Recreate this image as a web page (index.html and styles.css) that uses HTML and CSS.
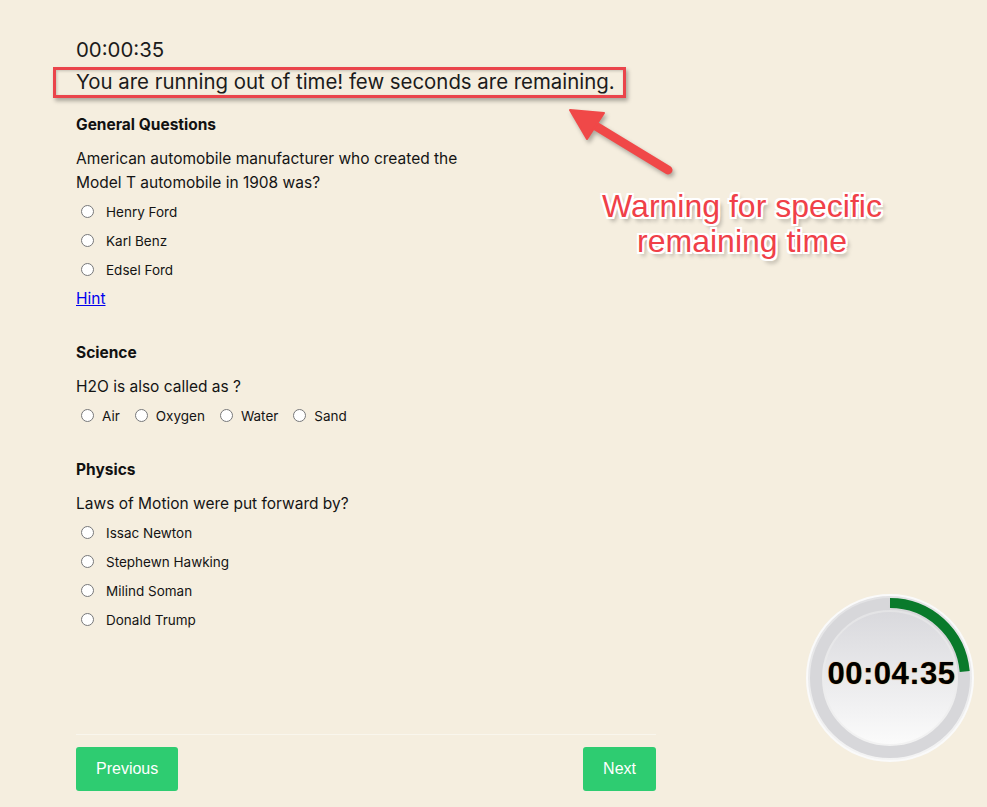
FILE: index.html
```html
<!DOCTYPE html>
<html lang="en">
<head>
  <meta charset="UTF-8" />
  <meta name="viewport" content="width=device-width, initial-scale=1.0" />
  <title>Quiz Timer</title>
  <link rel="stylesheet" href="styles.css">
</head>
<body>
  <main class="quiz">
    <div class="countdown">00:00:35</div>
    <div class="warning">You are running out of time! few seconds are remaining.</div>

    <section class="block">
      <h3>General Questions</h3>
      <p class="question">American automobile manufacturer who created the Model T automobile in 1908 was?</p>
      <label class="option"><input type="radio" name="q1" /><span>Henry Ford</span></label>
      <label class="option"><input type="radio" name="q1" /><span>Karl Benz</span></label>
      <label class="option"><input type="radio" name="q1" /><span>Edsel Ford</span></label>
      <a class="hint" href="#">Hint</a>
    </section>

    <section class="block">
      <h3>Science</h3>
      <p class="question">H2O is also called as ?</p>
      <div class="inline-options">
        <label><input type="radio" name="q2" /><span>Air</span></label>
        <label><input type="radio" name="q2" /><span>Oxygen</span></label>
        <label><input type="radio" name="q2" /><span>Water</span></label>
        <label><input type="radio" name="q2" /><span>Sand</span></label>
      </div>
    </section>

    <section class="block">
      <h3>Physics</h3>
      <p class="question">Laws of Motion were put forward by?</p>
      <label class="option"><input type="radio" name="q3" /><span>Issac Newton</span></label>
      <label class="option"><input type="radio" name="q3" /><span>Stephewn Hawking</span></label>
      <label class="option"><input type="radio" name="q3" /><span>Milind Soman</span></label>
      <label class="option"><input type="radio" name="q3" /><span>Donald Trump</span></label>
    </section>

    <div class="quiz-nav">
      <button type="button" class="btn">Previous</button>
      <button type="button" class="btn">Next</button>
    </div>
  </main>

  <!-- screenshot annotation -->
  <div class="callout-box"></div>
  <svg class="callout-arrow" width="140" height="90" viewBox="0 0 140 90">
    <line x1="118" y1="70" x2="44" y2="25" stroke="#f04848" stroke-width="9" stroke-linecap="round" />
    <polygon points="20,10 54,13 37,39" fill="#f04848" stroke="#f04848" stroke-width="2" stroke-linejoin="round" />
  </svg>
  <div class="callout-text">Warning for specific<br>remaining time</div>

  <div class="timer">
    <svg width="168" height="168" viewBox="0 0 168 168">
      <defs>
        <linearGradient id="face" x1="0" y1="0" x2="0" y2="1">
          <stop offset="0" stop-color="#d9d9dd" />
          <stop offset="1" stop-color="#fbfbfb" />
        </linearGradient>
        <linearGradient id="rim" x1="0" y1="0" x2="0" y2="1">
          <stop offset="0" stop-color="#e2e2e4" />
          <stop offset="1" stop-color="#f4f4f4" />
        </linearGradient>
      </defs>
      <circle cx="84" cy="84" r="83" fill="url(#rim)" stroke="#fafafa" stroke-width="2" />
      <circle cx="84" cy="84" r="74" fill="none" stroke="#d7d7da" stroke-width="12" />
      <path d="M84 9 A75 75 0 0 1 158.7 77.5" fill="none" stroke="#097a2b" stroke-width="10" />
      <circle cx="84" cy="84" r="66" fill="url(#face)" />
    </svg>
    <span class="timer-value">00:04:35</span>
  </div>
</body>
</html>
```

FILE: styles.css
```css
* {
  box-sizing: border-box;
  margin: 0;
  padding: 0;
}

body {
  background: #f5eedf;
  font-family: Inter, 'Noto Sans', sans-serif;
  color: #141414;
  position: relative;
  min-height: 807px;
}

.quiz {
  width: 580px;
  margin-left: 76px;
  padding-top: 38px;
}

.countdown,
.warning {
  font-size: 20.4px;
  line-height: 24px;
  color: #1b1b1b;
}

.warning {
  margin-top: 8px;
}

.block {
  margin-top: 21px;
}

.block + .block {
  margin-top: 30px;
}

.block:nth-child(4) {
  margin-top: 34px;
}

h3 {
  font-size: 15.5px;
  line-height: 20px;
  font-weight: 700;
  color: #111;
}

.question {
  font-size: 15.5px;
  line-height: 24px;
  margin-top: 12px;
  margin-bottom: 2px;
  max-width: 400px;
}

.option {
  display: flex;
  align-items: center;
  height: 29px;
  font-size: 13.5px;
}

input[type="radio"] {
  width: 13px;
  height: 13px;
  margin: 0 0 0 5px;
}

.option span {
  margin-left: 12px;
}

.hint {
  display: inline-block;
  margin-top: 5px;
  font-size: 15.5px;
  line-height: 20px;
  color: #0000ee;
}

.inline-options {
  display: flex;
  align-items: center;
  height: 29px;
  gap: 10px;
  font-size: 13.5px;
}

.inline-options label {
  display: flex;
  align-items: center;
}

.inline-options span {
  margin-left: 8px;
}

.quiz-nav {
  display: flex;
  justify-content: space-between;
  margin-top: 100px;
  padding-top: 12px;
  border-top: 1px solid rgba(255, 255, 255, 0.45);
}

.btn {
  background: #2ecc71;
  color: #fff;
  font-family: 'Liberation Sans', Arial, sans-serif;
  font-size: 16px;
  line-height: 20px;
  padding: 12px 20px;
  border: none;
  border-radius: 3px;
  cursor: pointer;
}

/* annotation layer */
.callout-box {
  position: absolute;
  left: 53px;
  top: 67px;
  width: 573px;
  height: 31px;
  border: 3px solid #ea444b;
  box-shadow: 2px 3px 4px rgba(0, 0, 0, 0.3), inset 1px 1px 3px rgba(0, 0, 0, 0.2);
}

.callout-arrow {
  position: absolute;
  left: 550px;
  top: 100px;
  filter: drop-shadow(2px 3px 2px rgba(0, 0, 0, 0.3));
}

.callout-text {
  position: absolute;
  left: 592px;
  top: 189px;
  width: 300px;
  text-align: center;
  font-family: 'Liberation Sans', Arial, sans-serif;
  font-size: 32px;
  line-height: 35px;
  color: #f04048;
  text-shadow:
    -2px -2px 0 #fff, 2px -2px 0 #fff, -2px 2px 0 #fff, 2px 2px 0 #fff,
    0 -2px 0 #fff, 0 2px 0 #fff, -2px 0 0 #fff, 2px 0 0 #fff,
    3px 4px 4px rgba(0, 0, 0, 0.35);
}

.timer {
  position: absolute;
  left: 806px;
  top: 594px;
  width: 168px;
  height: 168px;
  display: flex;
  align-items: center;
  justify-content: center;
}

.timer svg {
  position: absolute;
  left: 0;
  top: 0;
}

.timer-value {
  position: relative;
  margin: -8px 0 0 3px;
  font-family: 'Liberation Sans', Arial, sans-serif;
  font-weight: 700;
  font-size: 31px;
  letter-spacing: 0.5px;
  color: #000;
  text-shadow: 0 0 1px #c87a00;
}
```
